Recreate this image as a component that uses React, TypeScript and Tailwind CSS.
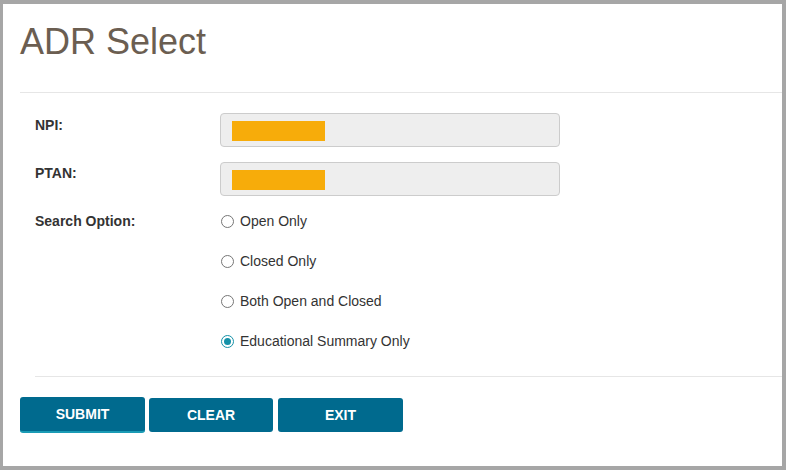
import React from "react";

function Radio({ label, checked }: { label: string; checked?: boolean }) {
  return (
    <label className="flex items-center h-5 ml-[1px]">
      {checked ? (
        <span className="w-[13px] h-[13px] rounded-full border border-[#1591a8] flex items-center justify-center bg-white">
          <span className="w-[7px] h-[7px] rounded-full bg-[#1591a8]" />
        </span>
      ) : (
        <span className="w-[13px] h-[13px] rounded-full border border-[#767676] bg-white" />
      )}
      <span className="ml-[6px] text-[14px] leading-5 text-[#333333]">{label}</span>
    </label>
  );
}

function RedactedInput() {
  return (
    <div className="w-[340px] h-[34px] rounded-[4px] border border-[#cccccc] bg-[#eeeeee] pl-[11px] pt-[7px]">
      <div className="w-[93px] h-[20px] bg-[#f7ac0a]" />
    </div>
  );
}

export default function App() {
  return (
    <div
      className="w-[786px] h-[470px] bg-[#a6a6a6] pt-[4px] pl-[3px] pr-[4px] pb-[4px]"
      style={{ fontFamily: '"Liberation Sans", Arial, sans-serif' }}
    >
      <div className="w-full h-full bg-white flex flex-col">
        <h1 className="pl-[17px] pt-[18px] text-[36px] leading-[40px] text-[#6b5e51] font-normal">
          ADR Select
        </h1>
        <div className="ml-[17px] mt-[30px] h-px bg-[#e6e6e6]" />

        <div className="mt-[20px] pl-[32px] flex flex-col">
          <div className="flex items-start">
            <div className="w-[185px] pt-[2px] text-[14px] leading-5 font-bold text-[#333333]">NPI:</div>
            <RedactedInput />
          </div>
          <div className="flex items-start mt-[15px]">
            <div className="w-[185px] pt-[1px] text-[14px] leading-5 font-bold text-[#333333]">PTAN:</div>
            <RedactedInput />
          </div>
          <div className="flex items-start mt-[15px]">
            <div className="w-[185px] text-[14px] leading-5 font-bold text-[#333333]">Search Option:</div>
            <div className="flex flex-col gap-5">
              <Radio label="Open Only" />
              <Radio label="Closed Only" />
              <Radio label="Both Open and Closed" />
              <Radio label="Educational Summary Only" checked />
            </div>
          </div>
        </div>

        <div className="ml-[32px] mt-[25px] h-px bg-[#e6e6e6]" />

        <div className="mt-[20px] pl-[17px] flex items-start gap-[4px]">
          <button className="w-[125px] h-[36px] rounded-[3px] bg-[#006a8e] border-b-2 border-[#1a9bb5] text-white text-[14px] font-bold">
            SUBMIT
          </button>
          <button className="w-[124px] h-[34px] mt-[1px] rounded-[3px] bg-[#006a8e] text-white text-[14px] font-bold">
            CLEAR
          </button>
          <button className="w-[125px] h-[34px] mt-[1px] ml-[1px] rounded-[3px] bg-[#006a8e] text-white text-[14px] font-bold">
            EXIT
          </button>
        </div>
      </div>
    </div>
  );
}
